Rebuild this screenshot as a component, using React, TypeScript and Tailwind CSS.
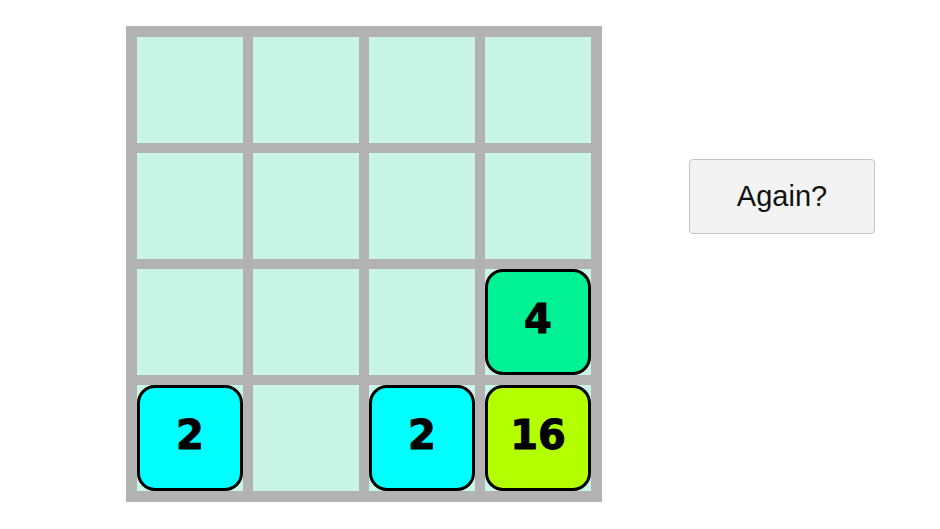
const BOARD: (number | null)[][] = [
  [null, null, null, null],
  [null, null, null, null],
  [null, null, null, 4],
  [2, null, 2, 16],
];

const TILE_BG: Record<number, string> = {
  2: "bg-[#00ffff]",
  4: "bg-[#00f294]",
  16: "bg-[#b4ff00]",
};

function Cell({ value }: { value: number | null }) {
  return (
    <div className="h-[106px] w-[106px] bg-[#c9f5e7]">
      {value !== null && (
        <div
          className={`flex h-full w-full items-center justify-center rounded-[18px] border-[3px] border-black pb-[6px] text-[40px] font-bold text-black ${TILE_BG[value]}`}
          style={{ fontFamily: '"DejaVu Sans", Verdana, sans-serif', WebkitTextStroke: "1px black" }}
        >
          {value}
        </div>
      )}
    </div>
  );
}

export default function App() {
  return (
    <div
      className="flex h-[529px] w-[940px] items-start gap-[87px] bg-white pl-[126px] pt-[26px]"
      style={{ fontFamily: '"Liberation Sans", Arial, sans-serif' }}
    >
      <div className="grid grid-cols-4 gap-[10px] bg-[#b3b3b3] p-[11px]">
        {BOARD.flat().map((v, i) => (
          <Cell key={i} value={v} />
        ))}
      </div>
      <button className="mt-[133px] h-[75px] w-[186px] rounded-[4px] border border-[#c4c4c4] bg-[#f3f3f3] text-[29px] text-[#111]">
        Again?
      </button>
    </div>
  );
}
